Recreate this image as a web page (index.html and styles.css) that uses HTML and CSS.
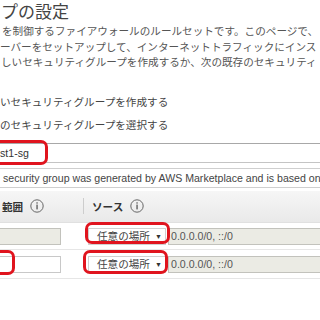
FILE: index.html
```html
<!DOCTYPE html>
<html lang="ja">
<head>
<meta charset="utf-8">
<link rel="stylesheet" href="styles.css">
</head>
<body>
<div class="page">
  <h1 class="title">プの設定</h1>
  <div class="desc">
    <div class="line l1">を制御するファイアウォールのルールセットです。このページで、</div>
    <div class="line l2">ーバーをセットアップして、インターネットトラフィックにインス</div>
    <div class="line l3">しいセキュリティグループを作成するか、次の既存のセキュリティ</div>
  </div>
  <div class="radio r1">いセキュリティグループを作成する</div>
  <div class="radio r2">のセキュリティグループを選択する</div>
  <div class="field name-field">st1-sg</div>
  <div class="field desc-field">security group was generated by AWS Marketplace and is based on</div>
  <div class="thead">
    <div class="th col-port">範囲<svg class="info" width="14" height="14" viewBox="0 0 14 14"><circle cx="7" cy="7" r="6.2" fill="none" stroke="#666" stroke-width="1"/><rect x="6.4" y="5.6" width="1.3" height="4.8" fill="#555"/><rect x="6.4" y="3.3" width="1.3" height="1.3" fill="#555"/></svg></div>
    <div class="sep"></div>
    <div class="th col-src">ソース<svg class="info" width="14" height="14" viewBox="0 0 14 14"><circle cx="7" cy="7" r="6.2" fill="none" stroke="#666" stroke-width="1"/><rect x="6.4" y="5.6" width="1.3" height="4.8" fill="#555"/><rect x="6.4" y="3.3" width="1.3" height="1.3" fill="#555"/></svg></div>
  </div>
  <div class="row row1">
    <div class="cell-port"><div class="inp disabled"></div></div>
    <div class="cell-src"><div class="select">任意の場所<span class="arrow">▼</span></div></div>
    <div class="cell-cidr"><div class="inp disabled cidr">0.0.0.0/0, ::/0</div></div>
  </div>
  <div class="row row2">
    <div class="cell-port"><div class="inp"></div></div>
    <div class="cell-src"><div class="select">任意の場所<span class="arrow">▼</span></div></div>
    <div class="cell-cidr"><div class="inp disabled cidr">0.0.0.0/0, ::/0</div></div>
  </div>

  <div class="mark m-name"></div>
  <div class="mark m-sel1"></div>
  <div class="mark m-sel2"></div>
  <div class="mark m-port2"></div>
</div>
</body>
</html>
```

FILE: styles.css
```css
html, body {
  margin: 0;
  padding: 0;
  background: #fff;
}
body {
  width: 320px;
  height: 320px;
  overflow: hidden;
  font-family: "Liberation Sans", "Noto Sans CJK JP", sans-serif;
  font-size: 10.6px;
  color: #444;
}
.page {
  position: relative;
  width: 320px;
  height: 320px;
  overflow: hidden;
}
.title {
  margin: 0;
  padding: 2px 0 0 1px;
  height: 22px;
  line-height: 22px;
  font-size: 17px;
  font-weight: normal;
  color: #444;
  white-space: nowrap;
}
.desc {
  color: #555;
}
.line {
  height: 15.5px;
  line-height: 15.5px;
  white-space: nowrap;
}
.l1 { padding-left: 2px; }
.l2 { padding-left: 0; }
.l3 { padding-left: 1px; }
.radio {
  height: 23.5px;
  line-height: 23.5px;
  white-space: nowrap;
  color: #444;
}
.r1 { margin-top: 20px; }
.field {
  box-sizing: border-box;
  height: 20px;
  line-height: 18px;
  white-space: nowrap;
  overflow: hidden;
  margin-left: -6px;
  width: 340px;
  padding-left: 5px;
  background: #fff;
}
.name-field {
  margin-top: 5px;
  border: 1px solid #c4c4c4;
  border-top-color: #a8a8a8;
  color: #333;
}
.desc-field {
  margin-top: 5px;
  border: 1px solid #cfcfcf;
  padding-left: 8px;
  color: #444;
}
.thead {
  margin-top: 3px;
  height: 32px;
  display: flex;
  align-items: center;
  background: linear-gradient(#f6f6f6, #e9e9e9);
  border-bottom: 1px solid #e0e0e0;
  box-sizing: border-box;
}
.th {
  display: flex;
  align-items: center;
  flex-shrink: 0;
  font-weight: bold;
  color: #333;
  white-space: nowrap;
}
.th .info { margin-left: 7px; }
.col-port {
  box-sizing: border-box;
  width: 83px;
  padding-left: 2px;
}
.sep {
  flex-shrink: 0;
  width: 1px;
  height: 16px;
  background: #cdcdcd;
}
.col-src {
  padding-left: 8px;
}
.row {
  display: flex;
  align-items: flex-start;
  border-bottom: 1px solid #e6e6e6;
  box-sizing: border-box;
}
.row > div {
  flex-shrink: 0;
}
.row1 {
  height: 27px;
  padding-top: 5px;
}
.row2 {
  height: 29px;
  padding-top: 6px;
}
.cell-port {
  width: 98px;
  margin-left: -10px;
}
.cell-src {
  width: 80px;
}
.cell-cidr {
  width: 170px;
}
.inp {
  box-sizing: border-box;
  height: 17px;
  width: 71px;
  border: 1px solid #c8c8c8;
  background: #fff;
  white-space: nowrap;
}
.inp.disabled {
  background: #ebebe4;
  border-color: #c2c2bc;
}
.inp.cidr {
  width: 170px;
  line-height: 15px;
  padding-left: 2px;
  color: #555;
}
.select {
  box-sizing: border-box;
  height: 17px;
  width: 78px;
  border: 1px solid #d0d0d0;
  background: #fff;
  line-height: 15px;
  padding-left: 8px;
  white-space: nowrap;
  color: #444;
}
.arrow {
  font-size: 7px;
  margin-left: 5px;
  color: #333;
  vertical-align: 1px;
}
.mark {
  position: absolute;
  box-sizing: border-box;
  border: 3px solid #e0141e;
  border-radius: 7px;
}
.m-name {
  left: -20px;
  top: 140px;
  width: 68px;
  height: 25px;
}
.m-sel1 {
  left: 85px;
  top: 222px;
  width: 85px;
  height: 22px;
}
.m-sel2 {
  left: 83px;
  top: 250px;
  width: 85px;
  height: 24px;
}
.m-port2 {
  left: -30px;
  top: 250px;
  width: 45px;
  height: 25px;
}
```
